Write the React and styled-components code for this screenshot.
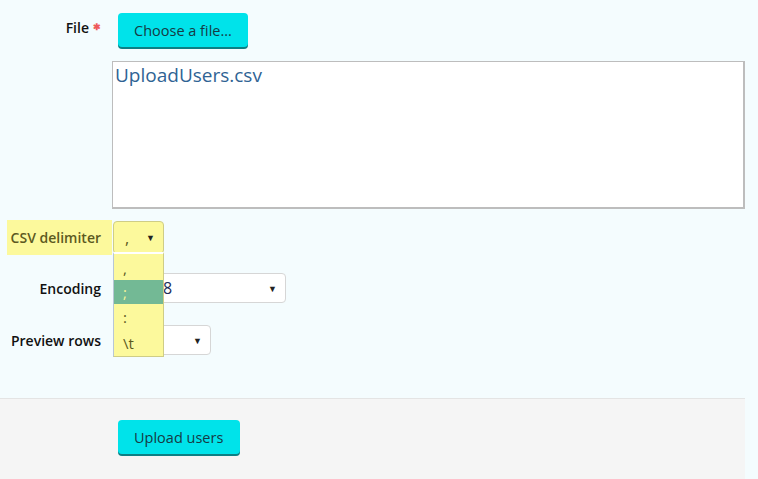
import React from "react";
import styled, { createGlobalStyle } from "styled-components";

const Global = createGlobalStyle`
  html, body {
    margin: 0;
    padding: 0;
    background: #f4fcfe;
  }
  body {
    font-family: "Open Sans", "Liberation Sans", sans-serif;
  }
`;

const Page = styled.div`
  width: 758px;
  height: 479px;
  overflow: hidden;
  background: #f4fcfe;
`;

const Form = styled.div`
  width: 745px;
  padding: 13px 0 0 7px;
  box-sizing: border-box;
  height: 398px;
  display: grid;
  grid-template-columns: 105px 1fr;
  grid-auto-rows: min-content;
`;

const Label = styled.div`
  display: flex;
  align-items: center;
  justify-content: flex-end;
  padding-right: ${(p) => p.$pr || 11}px;
  font-size: 14px;
  font-weight: 600;
  color: ${(p) => (p.$hl ? "#5c5a1f" : "#111")};
  background: ${(p) => (p.$hl ? "#fcf99c" : "transparent")};
  margin-top: ${(p) => p.$mt || 0}px;
  height: ${(p) => p.$h || 30}px;
  white-space: nowrap;
`;

const Star = styled.span`
  color: #ee5a5a;
  font-size: 9px;
  margin-left: 4px;
  position: relative;
  top: -1px;
`;

const Cell = styled.div`
  display: flex;
  align-items: center;
  margin-top: ${(p) => p.$mt || 0}px;
  position: relative;
  z-index: ${(p) => (p.$top ? 2 : "auto")};
`;

const Button = styled.button`
  font-family: "Open Sans", "Liberation Sans", sans-serif;
  font-size: 14.5px;
  color: #163a44;
  background: #00e3ea;
  border: none;
  border-radius: 4px;
  box-shadow: 0 2px 0 #0c7f84;
  height: 34px;
  padding: 0 16px;
  margin-left: 6px;
  cursor: pointer;
`;

const FileBox = styled.div`
  grid-column: 2;
  margin-top: 14px;
  height: 148px;
  background: #fff;
  border: 1px solid #bdbdbd;
  border-right-width: 2px;
  border-bottom-width: 2px;
  box-sizing: border-box;
  padding: 0 2px;
  font-size: 19px;
  color: #2f6394;
  line-height: 27px;
`;

const Select = styled.div`
  width: ${(p) => p.$w}px;
  height: ${(p) => p.$h || 30}px;
  box-sizing: border-box;
  background: ${(p) => (p.$hl ? "#fcf99c" : "#fff")};
  border: 1px solid ${(p) => (p.$hl ? "#cfcd86" : "#d6d6d6")};
  border-radius: 4px;
  display: flex;
  align-items: center;
  justify-content: space-between;
  padding: 0 8px 0 ${(p) => p.$pl || 11}px;
  font-size: 16px;
  color: ${(p) => (p.$hl ? "#5c5a1f" : "#1a2c5a")};
  margin-left: 1px;
`;

const Arrow = styled.span`
  font-size: 9px;
  color: #222;
`;

const Menu = styled.ul`
  position: absolute;
  left: 1px;
  top: 32px;
  width: 51px;
  margin: 0;
  padding: 3px 0 0;
  list-style: none;
  background: #fcf99c;
  border: 1px solid #cfcd86;
  border-left-color: #b8c7d6;
  border-top: 2px solid #fff;
  box-sizing: border-box;
  z-index: 2;
`;

const Option = styled.li`
  height: ${(p) => p.$h || 24}px;
  line-height: ${(p) => p.$h || 24}px;
  padding-left: 9px;
  font-size: 15px;
  font-weight: 500;
  background: ${(p) => (p.$active ? "#73b995" : "transparent")};
  color: ${(p) => (p.$active ? "#f4f39a" : "#5c5a1f")};
`;

const Footer = styled.div`
  width: 745px;
  height: 81px;
  background: #f5f5f5;
  border-top: 1px solid #e4e4e4;
  box-sizing: border-box;
  padding: 21px 0 0 118px;
`;

const SubmitButton = styled(Button)`
  margin-left: 0;
  height: 34px;
  padding: 0 17px 0 16px;
  font-size: 14.5px;
`;

export default function App() {
  return (
    <Page>
      <Global />
      <Form>
        <Label $h={28} $pr={11}>
          File<Star>✱</Star>
        </Label>
        <Cell>
          <Button>Choose a file...</Button>
        </Cell>
        <FileBox>UploadUsers.csv</FileBox>

        <Label $hl $mt={11} $h={35} $pr={11}>
          CSV delimiter
        </Label>
        <Cell $mt={11} $top>
          <Select $w={51} $h={33} $hl $pl={11}>
            <span>,</span>
            <Arrow>▼</Arrow>
          </Select>
          <Menu>
            <Option $h={23}>,</Option>
            <Option $active>;</Option>
            <Option $h={26}>:</Option>
            <Option $h={26}>\t</Option>
          </Menu>
        </Cell>

        <Label $mt={18} $pr={11}>
          Encoding
        </Label>
        <Cell $mt={18}>
          <Select $w={173} $pl={15}>
            <span>UTF-8</span>
            <Arrow>▼</Arrow>
          </Select>
        </Cell>

        <Label $mt={22} $pr={11}>
          Preview rows
        </Label>
        <Cell $mt={22}>
          <Select $w={98} $pl={60}>
            <span></span>
            <Arrow>▼</Arrow>
          </Select>
        </Cell>
      </Form>
      <Footer>
        <SubmitButton>Upload users</SubmitButton>
      </Footer>
    </Page>
  );
}
